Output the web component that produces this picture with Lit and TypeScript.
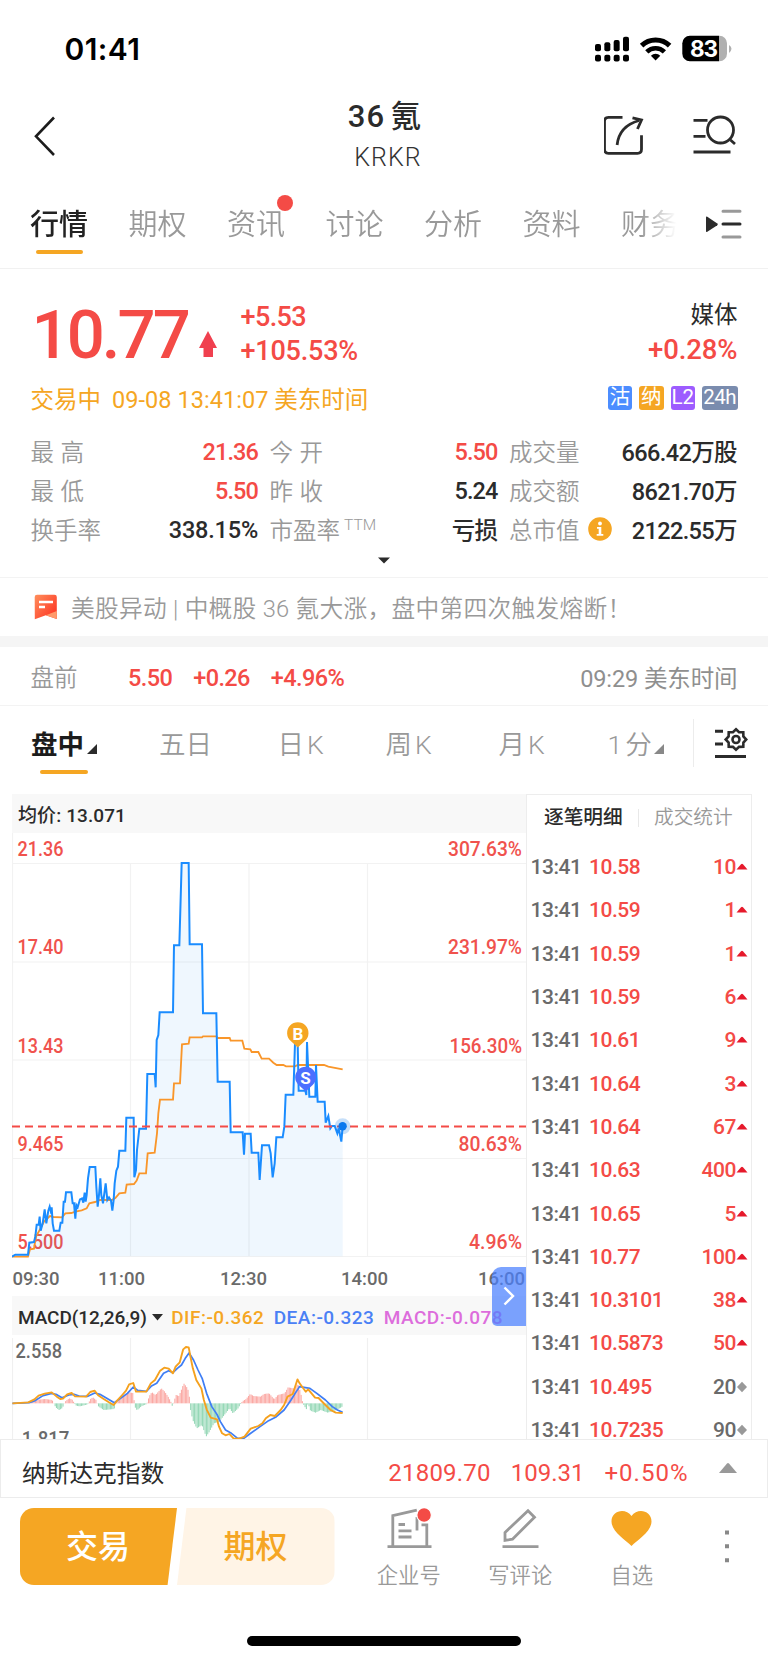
import { LitElement, html, svg, css } from "lit";
import { customElement } from "lit/decorators.js";

type Quote = { label: string; value: string; up?: boolean; wide?: boolean; sup?: string; info?: boolean };
type Trade = [price: string, qty: string, up: boolean];

const TABS = ["行情", "期权", "资讯", "讨论", "分析", "资料", "财务"];

const QUOTES: Quote[] = [
  { label: "最高", value: "21.36", up: true, wide: true },
  { label: "今开", value: "5.50", up: true, wide: true },
  { label: "成交量", value: "666.42万股" },
  { label: "最低", value: "5.50", up: true, wide: true },
  { label: "昨收", value: "5.24", wide: true },
  { label: "成交额", value: "8621.70万" },
  { label: "换手率", value: "338.15%" },
  { label: "市盈率", value: "亏损", sup: "TTM" },
  { label: "总市值", value: "2122.55万", info: true },
];

const TRADES: Trade[] = [
  ["10.58", "10", true],
  ["10.59", "1", true],
  ["10.59", "1", true],
  ["10.59", "6", true],
  ["10.61", "9", true],
  ["10.64", "3", true],
  ["10.64", "67", true],
  ["10.63", "400", true],
  ["10.65", "5", true],
  ["10.77", "100", true],
  ["10.3101", "38", true],
  ["10.5873", "50", true],
  ["10.495", "20", false],
  ["10.7235", "90", false],
];

const PRICE =
  "36,1400 46,1394 84,1394 88,1358 102,1356 106,1340 110,1304 116,1304 119,1280 122,1322 128,1300 134,1258 139,1300 145,1262 149,1250 152,1262 155,1252 158,1300 162,1322 178,1322 182,1298 187,1298 191,1235 195,1235 198,1207 214,1207 218,1240 222,1240 226,1286 229,1245 233,1252 240,1228 246,1225 250,1238 254,1208 257,1235 260,1215 264,1165 269,1131 286,1131 289,1190 293,1250 297,1215 301,1165 304,1215 309,1240 317,1180 322,1230 327,1222 333,1232 337,1262 341,1230 344,1180 349,1142 354,1130 358,1082 376,1082 379,983 401,983 403,1162 408,1140 411,1080 418,1016 438,1016 442,852 464,852 467,892 470,750 475,735 479,667 519,667 522,466 538,466 545,219 566,219 569,463 606,463 609,670 649,670 653,875 689,875 692,1027 728,1027 732,1094 735,1031 752,1031 755,1088 775,1088 779,1170 786,1066 807,1066 812,1090 818,1162 824,1120 829,1042 848,1042 853,1010 857,914 880,914 885,760 893,760 896,902 916,902 919,915 921,756 928,920 946,920 948,825 953,935 974,935 977,998 985,978 991,1015 996,1008 1004,1008 1012,1030 1016,1015 1024,1055 1028,1009";

const AVERAGE =
  "36,1400 84,1400 90,1378 102,1376 108,1340 120,1318 132,1295 150,1278 160,1281 186,1282 196,1270 214,1269 226,1265 245,1261 260,1255 268,1240 285,1236 300,1230 335,1230 346,1224 358,1210 376,1208 380,1184 402,1182 410,1172 418,1150 438,1150 443,1090 464,1088 471,1030 475,970 480,929 519,929 522,880 540,880 546,763 566,761 569,742 606,742 609,739 649,739 653,744 689,744 692,752 727,752 733,776 751,778 755,786 775,786 785,806 807,806 820,818 830,825 850,825 858,829 885,829 893,825 972,825 985,830 1028,838";

const DIF =
  "36,460 82,457 100,448 112,437 130,431 150,427 165,440 175,447 183,446 195,433 208,429 218,439 250,440 262,426 275,422 285,436 300,446 315,456 330,465 340,452 355,435 366,422 375,403 387,399 395,425 425,425 438,400 450,390 465,362 477,353 490,356 502,370 510,350 522,337 532,298 540,291 548,292 553,320 560,355 570,390 585,416 592,450 600,478 612,503 630,508 636,530 645,550 655,556 666,552 678,565 695,566 710,560 728,536 750,528 762,520 772,505 785,495 798,498 815,480 825,465 835,440 850,432 857,410 864,388 870,400 888,425 895,418 915,443 925,444 945,465 960,480 975,488 995,489";

const DEA =
  "36,460 85,458 100,453 125,437 150,430 165,434 180,443 200,435 215,433 230,438 255,439 275,429 290,433 310,445 332,458 350,445 370,430 387,411 400,421 425,424 440,408 455,400 475,370 490,362 502,368 515,355 527,345 538,325 549,309 562,330 575,360 587,385 600,430 615,470 630,493 640,515 655,540 672,550 690,565 708,565 725,552 755,530 780,512 800,502 825,480 845,450 857,430 870,410 900,415 920,430 945,450 965,470 980,480 995,487";

const HISTOGRAM: [number, number][] = [
  [85, 0], [95, 5], [110, 11], [130, 13], [150, 10], [155, 0], [160, -12], [170, -20], [180, -14], [185, 0],
  [190, 8], [200, 15], [210, 10], [214, 0], [220, -7], [230, -9], [250, -4], [256, 0], [260, 12], [268, 18],
  [278, 10], [281, 0], [285, -10], [300, -20], [330, -17], [335, 0], [345, 12], [355, 22], [370, 33], [385, 31],
  [389, 0], [393, -20], [400, -18], [410, -8], [425, -2], [428, 10], [435, 28], [440, 33], [450, 25], [467, 45],
  [477, 35], [488, 18], [495, 4], [500, -12], [503, 5], [510, 25], [518, 22], [525, 40], [532, 60], [540, 50],
  [547, 35], [551, -15], [558, -50], [570, -75], [585, -65], [597, -100], [605, -88], [620, -60], [635, -55],
  [650, -35], [665, -15], [675, -30], [690, -15], [700, 3], [705, 8], [712, 12], [725, 28], [735, 22], [755, 20],
  [765, 28], [780, 30], [795, 12], [805, 25], [825, 30], [835, 48], [850, 45], [864, 58], [872, 30], [878, 0],
  [888, -18], [893, 0], [900, -22], [915, -28], [930, -20], [950, -28], [970, -22], [990, -12], [997, -4],
];

function histogramAt(x: number): number {
  for (let i = 1; i < HISTOGRAM.length; i++) {
    const [x0, y0] = HISTOGRAM[i - 1];
    const [x1, y1] = HISTOGRAM[i];
    if (x >= x0 && x <= x1) return y0 + ((y1 - y0) * (x - x0)) / (x1 - x0);
  }
  return 0;
}

@customElement("app-header")
class AppHeader extends LitElement {
  static styles = css`
    :host { display: block; color: #2b2b2b; }
    .status { display: flex; align-items: center; height: 98px; box-sizing: border-box; padding: 0 36px 0 64.5px; }
    .time { flex: 1; font: 600 30px Inter, sans-serif; color: #000; letter-spacing: 0.4px; }
    .nav { display: flex; justify-content: space-between; height: 82px; padding: 0 30px 0 32px; }
    .side { width: 134px; display: flex; }
    .names { width: 200px; text-align: center; }
    .name { font-size: 31px; line-height: 38px; font-weight: 500; letter-spacing: 1.2px; word-spacing: -4px; }
    .code { font-size: 25px; line-height: 32px; padding: 6px 0 0 6px; color: #333; letter-spacing: 1.100px; font-weight: 350; }
    svg { display: block; }
    .tabs { display: flex; height: 88px; border-bottom: 1px solid #f1f1f1; }
    .strip { display: flex; gap: 40.5px; width: 648px; padding-left: 30px; overflow: hidden;
      -webkit-mask-image: linear-gradient(90deg, #000 94.5%, transparent 99.8%); mask-image: linear-gradient(90deg, #000 94.5%, transparent 99.8%); }
    .tab { flex: none; position: relative; font-size: 29px; line-height: 91px; color: #999; font-weight: 350; }
    .tab.on { color: #222; font-weight: 500; }
    .tab.on::after { content: ""; position: absolute; left: 6px; right: 5px; top: 69.500px; height: 4.5px; border-radius: 2px; background: #f5a623; }
    .tab.dot::after { content: ""; position: absolute; right: -8px; top: 15px; width: 16px; height: 16px; border-radius: 8px; background: #f44b46; }
    .more { padding: 28px 0 0 26.500px; }
  `;
  render() {
    const bars = [42, 37, 30, 20];
    return html`
      <div class="status">
        <div class="time">01:41</div>
        <svg width="137" height="28" viewBox="595 35 137 28">
          ${bars.map((top, i) => {
            const x = 595 + i * 9.33;
            const y = 30 + top / 3;
            return svg`<rect x=${x} y=${y} width="6" height=${51.3 - y} rx="2"></rect><rect x=${x} y="54.7" width="6" height="6.8" rx="2"></rect>`;
          })}
          <g fill="none" stroke="#000" stroke-width="5">
            <path d="M641.6 45.6a20 20 0 0 1 28 0"></path>
            <path d="M646.8 51.8a12.6 12.6 0 0 1 17.6 0" stroke-width="4.6"></path>
          </g>
          <path d="M655.6 60.6l-4.7-4.9a6.8 6.8 0 0 1 9.4 0z"></path>
          <clipPath id="cell"><rect x="682.3" y="35.8" width="44.7" height="25.5" rx="7.5"></rect></clipPath>
          <g clip-path="url(#cell)">
            <rect x="682" y="35" width="37" height="27"></rect>
            <rect x="719" y="35" width="9" height="27" fill="#b0b0b0"></rect>
          </g>
          <path d="M729 45q5 3.600 0 8z" fill="#b0b0b0"></path>
          <text x="690" y="56.6" font-family="Inter, sans-serif" font-size="22.500" font-weight="700" fill="#fff" textLength="28">83</text>
        </svg>
      </div>
      <div class="nav">
        <div class="side">
          <svg width="24" height="70" viewBox="32 98 24 70"><path d="M54 117.500L36 136.300L54 155" fill="none" stroke="#1c1c1c" stroke-width="2.6"></path></svg>
        </div>
        <div class="names">
          <div class="name">36 氪</div>
          <div class="code">KRKR</div>
        </div>
        <div class="side">
          <svg width="134" height="70" viewBox="604.500 98 134 70" fill="none" stroke="#2b2b2b" stroke-width="2.800">
            <path d="M623 117.300h-14q-4 0-4 4v28q0 4 4 4h29q4 0 4-4v-14"></path>
            <path d="M617.600 145q2-19 22-24.500"></path>
            <path d="M633 117.800l9 2.200l-4 9"></path>
            <path d="M694 120.300h14M694 136.300h12M694 152h37M731 140l4.500 4"></path>
            <circle cx="721" cy="130" r="13"></circle>
          </svg>
        </div>
      </div>
      <div class="tabs">
        <div class="strip">
          ${TABS.map((t, i) => html`<div class="tab ${i === 0 ? "on" : i === 2 ? "dot" : ""}">${t}</div>`)}
        </div>
        <div class="more">
          <svg width="38" height="32" viewBox="705 208 38 32">
            <path d="M706 217.500v13.500q0 1.500 1.300.7l10-6.500q1-.9 0-1.800l-10-6.600q-1.300-.8-1.300.7z" fill="#2b2b2b"></path>
            <g stroke-width="3" stroke-linecap="round"><path d="M723 211.300h17M723 237h17" stroke="#999"></path><path d="M723 224h17" stroke="#2b2b2b"></path></g>
          </svg>
        </div>
      </div>
    `;
  }
}

@customElement("quote-panel")
class QuotePanel extends LitElement {
  static styles = css`
    :host { display: block; color: #2b2b2b; }
    svg { display: block; }
    .quote { height: 309px; box-sizing: border-box; border-bottom: 1px solid #f3f3f3; padding: 0 30.5px; }
    .top { display: flex; height: 109px; color: #f44b46; }
    .price { font-size: 67px; line-height: 80px; padding: 26px 0 0 1px; font-weight: 500; letter-spacing: -2.900px; width: 166px; }
    .arrow { padding: 62px 0 0 1px; width: 42px; }
    .change { flex: 1; padding-top: 32px; font-size: 27px; line-height: 33.500px; font-weight: 500; letter-spacing: -0.200px; }
    .change .abs { letter-spacing: -0.600px; }
    .sector { padding-top: 29px; text-align: right; font-size: 27.500px; line-height: 34.500px; letter-spacing: -0.100px; font-weight: 500; }
    .sector .label { font-size: 23.500px; color: #2b2b2b; letter-spacing: 0; font-weight: 400; }
    .state { display: flex; align-items: center; height: 39px; color: #f5a623; font-size: 23.500px; font-weight: 400; }
    .state .date { padding-left: 11px; flex: 1; letter-spacing: 0.050px; }
    .state .zone { letter-spacing: 0; }
    .badges { display: flex; gap: 7px; }
    .badge { width: 24.500px; height: 24px; border-radius: 3px; color: #fff; text-align: center; font-size: 20.500px; line-height: 23px; font-weight: 400; }
    .blue { background: #4c8dff; }
    .orange { background: #f5a623; }
    .purple { background: #9d5cff; }
    .slate { background: #7a8cae; width: 35.500px; letter-spacing: -0.500px; }
    .grid { display: grid; grid-template-columns: 227.500px 228px 228px; column-gap: 11.500px; grid-auto-rows: 39.200px; padding-top: 14.500px; }
    .cell { display: flex; align-items: center; font-size: 23.500px; }
    .label { color: #999; font-weight: 350; }
    .label.wide { letter-spacing: 6.500px; }
    .sup { font-size: 15.500px; color: #999; align-self: flex-start; padding: 6px 0 0 4px; font-weight: 350; }
    .info { padding-left: 8.500px; }
    .value { flex: 1; text-align: right; font-weight: 500; letter-spacing: -0.600px; }
    .value.num { padding-top: 1.500px; letter-spacing: -0.900px; }
    .value.pct { letter-spacing: -0.200px; }
    .up { color: #f44b46; }
    .fold { display: flex; justify-content: center; padding-top: 8px; }
    .news { display: flex; align-items: center; height: 58px; padding-left: 34px; font-size: 23.700px; color: #999; font-weight: 350; }
    .news span { padding-left: 13px; white-space: pre; letter-spacing: 0.300px; }
    .band { height: 11px; background: #f5f5f5; }
    .pre { display: flex; align-items: center; height: 58px; border-bottom: 1px solid #f3f3f3; padding: 0 30.500px; color: #999; font-size: 23.500px; }
    .pre .tag { width: 97.500px; font-weight: 350; }
    .pre .nums { flex: 1; display: flex; gap: 21px; font-weight: 500; letter-spacing: -0.600px; padding-top: 3px; }
    .pre .clock { color: #8f8f8f; letter-spacing: -0.100px; padding-top: 1px; }
  `;
  render() {
    return html`
      <div class="quote">
        <div class="top">
          <div class="price">10.77</div>
          <div class="arrow"><svg width="18" height="27" viewBox="0 0 18 27"><path d="M9 0L18 17h-4v9h-9.500v-9h-4.500z" fill="#f0404f"></path></svg></div>
          <div class="change"><div class="abs">+5.53</div><div>+105.53%</div></div>
          <div class="sector"><div class="label">媒体</div><div>+0.28%</div></div>
        </div>
        <div class="state">
          <div>交易中</div>
          <div class="date">09-08 13:41:07 <span class="zone">美东时间</span></div>
          <div class="badges">
            <div class="badge blue">沽</div><div class="badge orange">纳</div><div class="badge purple">L2</div><div class="badge slate">24h</div>
          </div>
        </div>
        <div class="grid">
          ${QUOTES.map(
            (q) => html`<div class="cell">
              <div class="label ${q.wide ? "wide" : ""}">${q.label}</div>
              ${q.sup ? html`<div class="sup">${q.sup}</div>` : ""}
              ${q.info
                ? html`<div class="info"><svg width="24" height="24" viewBox="0 0 24 24"><circle cx="12" cy="12" r="11.800" fill="#f5a623"></circle><circle cx="12" cy="6.500" r="1.900" fill="#fff"></circle><path d="M9 10h4.300v7h2v1.800h-6.600v-1.800h2v-5.200h-1.700z" fill="#fff"></path></svg></div>`
                : ""}
              <div class="value ${q.up ? "up" : ""} ${/^[\d.%]+$/.test(q.value) ? "num" : ""} ${q.value.endsWith("%") ? "pct" : ""}">${q.value}</div>
            </div>`
          )}
        </div>
        <div class="fold"><svg width="12" height="7" viewBox="0 0 12 7"><path d="M0 .500h12L6 6.500z" fill="#2b2b2b"></path></svg></div>
      </div>
      <div class="news">
        <svg width="24" height="26" viewBox="0 0 24 26">
          <defs><linearGradient id="flag" x1="0" y1="0" x2="1" y2="0.900"><stop offset="0" stop-color="#ff8f5c"></stop><stop offset="1" stop-color="#fd3021"></stop></linearGradient></defs>
          <path d="M.7 3q0-2.300 2.300-2.300h17.500q2.300 0 2.300 2.300v22l-11-3.700l-11 4z" fill="url(#flag)"></path>
          <path d="M22.800 17v8l-11-3.700z" fill="#ff9a6b"></path>
          <path d="M5 8h14M5 13h6" stroke="#fff" stroke-width="2.400"></path>
        </svg>
        <span>美股异动 | 中概股 36 氪大涨，盘中第四次触发熔断！</span>
      </div>
      <div class="band"></div>
      <div class="pre">
        <div class="tag">盘前</div>
        <div class="nums up"><div>5.50</div><div>+0.26</div><div>+4.96%</div></div>
        <div class="clock">09:29 美东时间</div>
      </div>
    `;
  }
}

@customElement("chart-panel")
class ChartPanel extends LitElement {
  static styles = css`
    :host { display: block; color: #2b2b2b; }
    svg { display: block; }
    text { font-family: Roboto, "Noto Sans CJK SC", sans-serif; }
    .periods { display: grid; grid-template-columns: 128px 118.500px 108px 113px 109px 85.500px 1fr; height: 88px; box-sizing: border-box; padding: 13px 0 0 31px; }
    .period { position: relative; display: flex; height: 46px; align-items: center; font-size: 26.500px; color: #999; font-weight: 350; white-space: pre; word-spacing: -3.500px; }
    .period.on { color: #1c1c1c; font-weight: 700; }
    .period.on::after { content: ""; position: absolute; left: 9px; width: 48px; top: 50.500px; height: 4.500px; border-radius: 2px; background: #f5a623; }
    .corner { width: 0; height: 0; border-left: 10px solid transparent; border-bottom: 10px solid #888; margin: 13px 0 0 2px; }
    .on .corner { border-bottom-color: #2b2b2b; margin-left: 3px; }
    .setting { height: 48px; border-left: 1px solid #ececec; padding-left: 20px; display: flex; align-items: center; }
    .body { display: flex; height: 645px; padding-left: 12px; overflow: hidden; }
    .left { position: relative; width: 514px; }
    .bar { display: flex; align-items: center; height: 39px; background: #f8f8f8; padding-left: 6px; font-size: 19px; font-weight: 500; box-sizing: border-box; letter-spacing: 0.100px; }
    .macd { gap: 9.500px; padding: 3px 0 0 6px; white-space: nowrap; letter-spacing: 0.480px; }
    .name { display: flex; align-items: center; gap: 5px; margin-right: -1px; font-weight: 500; letter-spacing: -0.080px; }
    .dif { color: #f5a623; } .dea { color: #4a80f5; } .hist { color: #dd6ddc; }
    .toggle { position: absolute; right: 0; top: 472.500px; width: 34px; height: 59px; border-radius: 9px 0 0 5px; background: rgba(74, 128, 255, 0.720); display: flex; align-items: center; justify-content: center; }
    .right { width: 224px; border: 1px solid #ededed; border-bottom: 0; }
    .head { display: flex; align-items: center; height: 46px; padding: 0 0 4.500px 17px; font-size: 19.700px; }
    .head .a { font-weight: 500; width: 94px; line-height: 18px; }
    .head .b { color: #999; border-left: 1px solid #e8e8e8; line-height: 18px; padding-left: 15px; font-weight: 350; }
    .trade { display: flex; align-items: center; height: 43.300px; padding: 0 3px 0 3.500px; font-size: 21px; letter-spacing: -0.450px; color: #f44b46; font-weight: 500; }
    .trade .t { color: #6a6a6a; width: 58.500px; }
    .trade .p { flex: 1; }
    .trade .flat { color: #6a6a6a; }
  `;
  render() {
    const prices = ["21.36", "17.40", "13.43", "9.465", "5.500"];
    const rates: [string, number][] = [["307.63%", 448], ["231.97%", 448], ["156.30%", 449.500], ["80.63%", 458.500], ["4.96%", 469]];
    const times: [string, number][] = [["09:30", 12.500], ["11:00", 98], ["12:30", 220], ["14:00", 341], ["16:00", 478]];
    const base = [856, 954.200, 1052.500, 1151, 1248.500];
    const rows = [863.500, 962, 1060, 1158.500, 1256.500];
    const cols = [130.500, 249, 367.500];
    const bars = [];
    for (let x = 86; x < 995; x += 3.820) {
      const v = histogramAt(x);
      bars.push(svg`<rect x=${x} y=${v > 0 ? 460 - v : 460} width="3.100" height=${Math.abs(v)} fill=${v > 0 ? "#fba9a4" : "#96d8b7"}></rect>`);
    }
    const gear = Array.from({ length: 16 }, (_, i) => {
      const a = (i * Math.PI) / 8 - Math.PI / 2;
      const r = i % 2 ? 8 : 10.300;
      return `${(736 + r * Math.cos(a)).toFixed(2)},${(739.500 + r * Math.sin(a)).toFixed(2)}`;
    }).join(" ");
    return html`
      <div class="periods">
        <div class="period on">盘中<i class="corner"></i></div>
        <div class="period">五日</div>
        <div class="period">日 K</div>
        <div class="period">周 K</div>
        <div class="period">月 K</div>
        <div class="period">1 分<i class="corner"></i></div>
        <div class="setting">
          <svg width="34" height="34" viewBox="714 726 34 34" fill="none" stroke="#2b2b2b" stroke-width="2.600">
            <path d="M715 731.300h8M715 744h8M715 756.500h31" stroke-width="3"></path>
            <polygon points=${gear}></polygon><circle cx="736" cy="739.500" r="3.500"></circle>
          </svg>
        </div>
      </div>
      <div class="body">
        <div class="left">
          <div class="bar">均价: 13.071</div>
          <svg width="514" height="463" viewBox="12 833 514 463">
            <g stroke="#f2f2f2" stroke-width="1.200">
              ${rows.map((y) => svg`<path d="M12 ${y}H526"></path>`)}
              ${cols.map((x) => svg`<path d="M${x} 863V1256"></path>`)}
              <path d="M12.500 833V1256"></path>
            </g>
            <g font-size="19.700" font-weight="500" fill="#f0524d">
              ${prices.map((p, i) => svg`<text x="17.500" y=${base[i]} textLength="46" lengthAdjust="spacingAndGlyphs">${p}</text>`)}
              ${rates.map(([r, x], i) => svg`<text x=${x} y=${base[i]} textLength=${522 - x} lengthAdjust="spacingAndGlyphs">${r}</text>`)}
            </g>
            <g font-size="19" fill="#6a6a6a" font-weight="500">
              ${times.map(([t, x]) => svg`<text x=${x} y="1284.500" textLength="47" lengthAdjust="spacingAndGlyphs">${t}</text>`)}
            </g>
            <g transform="translate(0 790) scale(.333333)" fill="none" stroke-width="6" stroke-linejoin="miter">
              <polyline points="${PRICE} 1028,1399 36,1399" fill="rgba(30,136,240,0.070)"></polyline>
              <polyline points=${AVERAGE} stroke="#f9962a" stroke-width="5.500"></polyline>
              <polyline points=${PRICE} stroke="#1a8cff"></polyline>
            </g>
            <path d="M12 1126.400H526" stroke="#f44b46" stroke-width="2" stroke-dasharray="8 5"></path>
            <circle cx="342.600" cy="1126.300" r="8" fill="#1a80e8" opacity=".25"></circle>
            <circle cx="342.600" cy="1126.300" r="4.200" fill="#0a78ee"></circle>
            <path d="M297.800 1047.500l-7-6.500a10.700 10.700 0 1 1 14 0z" fill="#f5a623"></path>
            <path d="M305.700 1091.500l-7-6.500a10.500 10.500 0 1 1 14 0z" fill="#4c6fff"></path>
            <g font-size="17" font-weight="700" fill="#fff" text-anchor="middle"><text x="298" y="1039.700">B</text><text x="305.500" y="1084">S</text></g>
          </svg>
          <div class="bar macd">
            <div class="name">MACD(12,26,9)<svg width="11" height="7" viewBox="0 0 11 7"><path d="M0 0h11L5.500 6.500z" fill="#2b2b2b"></path></svg></div>
            <div class="dif">DIF:-0.362</div><div class="dea">DEA:-0.323</div><div class="hist">MACD:-0.078</div>
          </div>
          <svg width="514" height="104" viewBox="12 1335 514 104">
            <path d="M12.500 1338V1439M130.500 1338V1439M249 1338V1439M367.500 1338V1439" stroke="#f0f0f0" stroke-width="1.200"></path>
            <g font-size="19.500" fill="#6a6a6a" font-weight="500">
              <text x="15.500" y="1357.500" textLength="46.500" lengthAdjust="spacingAndGlyphs">2.558</text>
              <text x="15.500" y="1446" textLength="54" lengthAdjust="spacingAndGlyphs">-1.817</text>
            </g>
            <g transform="translate(0 1250) scale(.344360 .333333)" fill="none" stroke-width="5" stroke-linejoin="round">
              ${bars}
              <polyline points=${DEA} stroke="#3f7ef5"></polyline>
              <polyline points=${DIF} stroke="#f5a11e" stroke-width="5.500"></polyline>
            </g>
          </svg>
          <div class="toggle"><svg width="12" height="20" viewBox="0 0 12 20"><path d="M1.500 1.500L10 10L1.500 18.500" fill="none" stroke="#fff" stroke-width="2.400"></path></svg></div>
        </div>
        <div class="right">
          <div class="head"><div class="a">逐笔明细</div><div class="b">成交统计</div></div>
          ${TRADES.map(
            ([p, q, up]) => html`<div class="trade">
              <div class="t">13:41</div>
              <div class="p">${p}</div>
              <div class=${up ? "" : "flat"}>${q}</div>
              <svg width="12" height="12" viewBox="0 0 12 12">${up
                ? svg`<path d="M.500 8.500L5 3.300q1-1 2 0L11.500 8.500z" fill="#e6192b"></path>`
                : svg`<path d="M6 .800L11 6L6 11.200L1 6z" fill="#999"></path>`}</svg>
            </div>`
          )}
        </div>
      </div>
    `;
  }
}

@customElement("bottom-dock")
class BottomDock extends LitElement {
  static styles = css`
    :host { display: block; color: #2b2b2b; }
    svg { display: block; }
    .index { display: flex; align-items: center; height: 59px; box-sizing: border-box; border: 1px solid #ececec; padding: 7px 29px 0 21px; font-size: 23.700px; }
    .index .name { flex: 1; }
    .nums { display: flex; gap: 20px; color: #f44b46; font-size: 24px; margin-right: 29.500px; padding-top: 2px; }
    .nums .a { letter-spacing: 0.200px; }
    .nums .c { letter-spacing: 1px; }
    .dock { display: flex; height: 138px; padding: 10px 0 0 20px; box-sizing: border-box; }
    .btn { height: 77px; font-size: 32px; line-height: 78px; font-weight: 500; box-sizing: border-box; }
    .trade { width: 157px; background: #f5a623; color: #fff; border-radius: 14px 0 0 14px; clip-path: polygon(0 0, 100% 0, 94% 100%, 0 100%); padding-left: 46px; }
    .option { width: 157.500px; background: #fff4e6; color: #f5a623; border-radius: 0 14px 14px 0; clip-path: polygon(6% 0, 100% 0, 100% 100%, 0 100%); padding-left: 46.500px; }
    .item { display: flex; flex-direction: column; align-items: center; color: #999; font-size: 21.300px; line-height: 26px; font-weight: 350; width: 111.500px; }
    .item svg { margin-bottom: 10.500px; }
    .first { margin-left: 18.500px; }
    .more { padding: 21px 0 0 36px; }
    .home { width: 274px; height: 10px; border-radius: 5px; background: #000; margin: 0 auto; }
  `;
  render() {
    return html`
      <div class="index">
        <div class="name">纳斯达克指数</div>
        <div class="nums"><div class="a">21809.70</div><div>109.31</div><div class="c">+0.50%</div></div>
        <svg width="20" height="24" viewBox="0 0 20 24"><path d="M1 13L9 3.500q1-1 2 0L19 13z" fill="#999"></path></svg>
      </div>
      <div class="dock">
        <div class="btn trade">交易</div>
        <div class="btn option">期权</div>
        <div class="item first">
          <svg width="46" height="44" viewBox="386.500 1507 46 44" fill="none" stroke="#999" stroke-width="2.800">
            <path d="M388 1545.700h44M393.300 1545v-30.300l24-5.500M417.500 1516v13.500M422 1523.800h5.300v21.500M399 1523.500h6.500M399 1529.800h13M399 1536h13"></path>
            <circle cx="424.600" cy="1514" r="7.300" fill="#f44b46" stroke="#fff" stroke-width="1.200"></circle>
          </svg>
          企业号
        </div>
        <div class="item">
          <svg width="40" height="44" viewBox="500.500 1507 40 44" fill="none" stroke="#999" stroke-width="2.800">
            <path d="M503 1545.700h36M505.500 1531.500l23-21.800l6.500 6.500l-22 22l-7.500 1.200z"></path>
          </svg>
          写评论
        </div>
        <div class="item">
          <svg width="42" height="44" viewBox="611.500 1508 42 44">
            <path d="M632 1546C626 1540 612 1531.500 612 1521.500C612 1510.500 626 1507.500 632 1516C638 1507.500 652 1510.500 652 1521.500C652 1531.500 638 1540 632 1546z" fill="#f5a623"></path>
          </svg>
          自选
        </div>
        <div class="more"><svg width="6" height="36" viewBox="0 0 6 36"><path d="M1 1.500h4v4h-4zM1 15.200h4v4h-4zM1 29.200h4v4h-4z" fill="#888"></path></svg></div>
      </div>
      <div class="home"></div>
    `;
  }
}

@customElement("app-root")
class AppRoot extends LitElement {
  static styles = css`
    :host { display: block; width: 768px; height: 1663px; overflow: hidden; background: #fff; font-family: Roboto, "Noto Sans CJK SC", sans-serif; }
  `;
  render() {
    return html`<app-header></app-header><quote-panel></quote-panel><chart-panel></chart-panel><bottom-dock></bottom-dock>`;
  }
}
